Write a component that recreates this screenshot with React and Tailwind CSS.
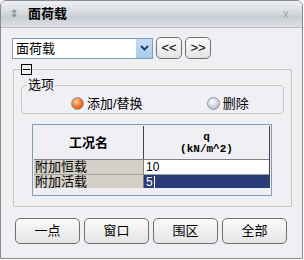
import React from "react";

const font = { fontFamily: '"Liberation Sans", "Noto Sans CJK SC", sans-serif' };

const Radio = ({ checked, label }) => (
    <div className="flex items-center gap-[3px]">
        <div
            className={
                "w-[13px] h-[13px] rounded-full border border-[#8f97a6] flex items-center justify-center " +
                (checked ? "bg-[radial-gradient(circle_at_40%_35%,#ffd2a8,#f26a1a_55%,#c94a10)]" : "bg-[radial-gradient(circle_at_40%_35%,#ffffff,#c8ccd4_60%,#9ba2ad)]")
            }
        />
        <span className="text-[13px] leading-none text-black">{label}</span>
    </div>
);

const Btn = ({ children, className }) => (
    <button className={"rounded-[5px] border border-[#707070] bg-[linear-gradient(#fbfbfb,#e4e4e4)] text-[13px] text-black flex items-center justify-center " + className}>
        {children}
    </button>
);

export default function App() {
    return (
        <div className="w-[304px] h-[260px] bg-white" style={font}>
            <div className="w-[303px] h-[259px] border border-[#8a8a8a] rounded-t-[6px] bg-[#f0f0f4] flex flex-col overflow-hidden">
                <div className="h-[27px] shrink-0 flex items-center px-[9px] bg-[linear-gradient(#eef0f3,#d3d7dd_50%,#c8ccd3_60%,#dde0e5)] border-b border-[#b9bdc4]">
                    <span className="text-[10px] text-[#777] w-[14px] leading-none">⇕</span>
                    <span className="ml-[4px] text-[13px] font-bold text-black">面荷载</span>
                    <div className="flex-1" />
                    <span className="text-[13px] text-[#a8a8a8] mr-[4px]">x</span>
                </div>
                <div className="flex-1 px-[11px] pt-[9px] flex flex-col">
                    <div className="flex items-center gap-[3px]">
                        <div className="w-[141px] h-[21px] border border-[#7f9db9] bg-white flex items-center">
                            <span className="flex-1 pl-[3px] text-[13px] leading-none">面荷载</span>
                            <div className="w-[16px] h-[19px] bg-[linear-gradient(#c2dcf5,#a8cbef)] flex items-center justify-center">
                                <svg width="9" height="6" viewBox="0 0 9 6"><path d="M1 1 L4.5 4.5 L8 1" stroke="#2c3e66" strokeWidth="2" fill="none" /></svg>
                            </div>
                        </div>
                        <Btn className="w-[26px] h-[22px]">&lt;&lt;</Btn>
                        <Btn className="w-[26px] h-[22px]">&gt;&gt;</Btn>
                    </div>
                    <div className="relative mt-[10px] ml-[1px] w-[279px] h-[138px] border border-[#c9c7ba] rounded-[2px]">
                        <div className="absolute -top-[6px] left-[7px] w-[11px] h-[11px] bg-[#f0f0f4] border border-black flex items-center justify-center">
                            <div className="w-[7px] h-[1px] bg-black" />
                        </div>
                        <div className="mt-[15px] mx-[7px] h-[29px] border border-[#c9c7ba] rounded-[4px] relative">
                            <span className="absolute -top-[9px] left-[5px] bg-[#f0f0f4] px-[1px] text-[13px] leading-[16px]">选项</span>
                            <div className="flex items-center h-full pt-[8px] pl-[49px]">
                                <Radio checked label="添加/替换" />
                                <div className="w-[64px]" />
                                <Radio label="删除" />
                            </div>
                        </div>
                        <div className="mt-[10px] ml-[18px] w-[240px] h-[72px] border border-[#7f9db9] bg-[#f0f0f4] p-[1px]">
                            <div className="w-[236px] flex flex-col border-r border-[#404040]">
                                <div className="flex h-[34px] border-b border-[#808080]">
                                    <div className="w-[110px] border-r border-[#404040] bg-[#f0f0f4] flex items-center justify-center text-[13px] font-bold">工况名</div>
                                    <div className="flex-1 bg-[#f0f0f4] flex flex-col items-center justify-center text-[11px] font-bold leading-[12px]" style={{ fontFamily: '"Liberation Mono", monospace' }}>
                                        <span>q</span>
                                        <span>(kN/m^2)</span>
                                    </div>
                                </div>
                                <div className="flex h-[14px]">
                                    <div className="w-[110px] bg-[#d4d0c8] text-[13px] leading-[14px] pl-[1px] border-r border-[#808080]">附加恒载</div>
                                    <div className="flex-1 bg-white text-[12px] leading-[14px] pl-[2px]">10</div>
                                </div>
                                <div className="flex h-[14px] border-t border-[#a0a0a0]">
                                    <div className="w-[110px] bg-[#d4d0c8] text-[13px] leading-[14px] pl-[1px] border-r border-[#808080]">附加活载</div>
                                    <div className="flex-1 bg-[#2a3c78] text-[12px] leading-[14px] text-white pl-[2px] flex items-center">
                                        <span>5</span>
                                        <div className="w-[1px] h-[12px] bg-white ml-[1px]" />
                                    </div>
                                </div>
                            </div>
                        </div>
                    </div>
                    <div className="flex gap-[4px] mt-[11px] ml-[3px]">
                        <Btn className="w-[65px] h-[26px]">一点</Btn>
                        <Btn className="w-[65px] h-[26px]">窗口</Btn>
                        <Btn className="w-[65px] h-[26px]">围区</Btn>
                        <Btn className="w-[65px] h-[26px]">全部</Btn>
                    </div>
                </div>
            </div>
        </div>
    );
}
